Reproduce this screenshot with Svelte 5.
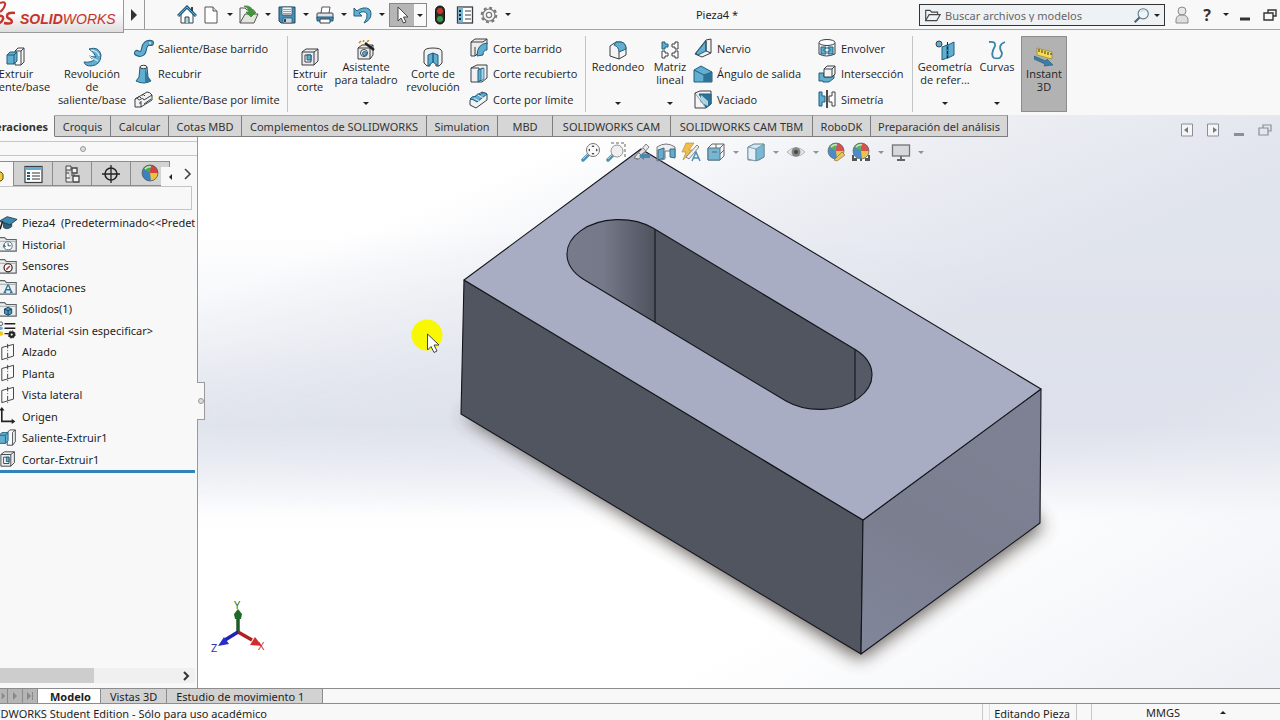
<script>
  const B = '#62aed0';
  const D = '#1f5f80';
  const K = '#3a3f44';
  const L = '#a9d5e8';
  const G = '#ececec';

  const cube = (x, y) =>
    `<path d="M${x} ${y + 3}l3-3h7v9l-3 3h-7z" fill="${B}" stroke="${D}"/><path d="M${x} ${y + 3}h7v9M${x + 7} ${y + 3}l3-3" fill="none" stroke="${D}"/>`;
  const folder = `<path d="M-1 3h6l2 2h11v13H-1z" fill="#eceeef" stroke="#5f6468" stroke-width="1.300"/><path d="M0 7h17" stroke="#888" stroke-width=".8"/>`;
  const plane = `<path d="M2 5l13-3.500v13L2 18.500z" fill="#fafafa" stroke="#333"/><path d="M8.500 1v18" stroke="#333" stroke-dasharray="5 2 1 2" fill="none"/>`;
  const sphere = `<circle cx="10" cy="9" r="8" fill="#3b7fc4"/><path d="M10 9L3 5A8 8 0 0 1 11 1z" fill="#4fa74a"/><path d="M10 9L11 1A8 8 0 0 1 18 9z" fill="#d8403a"/><path d="M10 9h8a8 8 0 0 1-7 8z" fill="#e9c33a"/><circle cx="10" cy="9" r="8" fill="none" stroke="#555" stroke-width=".7"/><path d="M5 5q3-3 6-2" stroke="#fff" stroke-width="1.500" fill="none" opacity=".7"/>`;
  const lens = `<path d="M8 12l-6 6" stroke="#3c86a8" stroke-width="3.500" stroke-linecap="round"/><path d="M7 12l-5 5" stroke="#9fd0e2" stroke-width="1"/>`;

  const icons = {
    home: `<path d="M4 9v9h12V9l-6-6z" fill="#fff" stroke="${K}"/><path d="M1 11l9-9 9 9" fill="none" stroke="${D}" stroke-width="3"/><path d="M1 11l9-9 9 9" fill="none" stroke="${B}" stroke-width="1"/><path d="M8 18v-6h4v6" fill="${L}" stroke="${K}"/><path d="M15 2v4" stroke="${K}" stroke-width="2"/>`,
    page: `<path d="M4 2h8l4 4v12H4z" fill="#fff" stroke="#555"/><path d="M12 2v4h4" fill="#ddd" stroke="#555"/>`,
    open: `<path d="M1 18V3h5l2 2h7v4" fill="#f4f4f4" stroke="#555"/><path d="M1 18l5-9h13l-4 9z" fill="#e3e6df" stroke="#555"/><path d="M5 1q8-1 9 6h3l-5 5-5-5h3q0-4-5-6z" fill="#3c9a35" stroke="#2a7426" stroke-width=".6"/>`,
    save: `<path d="M2 2h16v16H4l-2-2z" fill="#4590b8" stroke="#22485c"/><path d="M5 2h10v8H5z" fill="#f1f5f7" stroke="#22485c" stroke-width=".7"/><path d="M6 4.500h8M6 6.500h8M6 8.500h8" stroke="#7b8b94" stroke-width=".8"/><path d="M6 13h9v5H6z" fill="#cfd6da" stroke="#22485c" stroke-width=".7"/><path d="M8 14v3" stroke="#22485c" stroke-width="2"/>`,
    print: `<path d="M6 8l1-6h8l-1 6" fill="#fff" stroke="#555"/><path d="M2 9q0-1 1-1h14q1 0 1 1v5H2z" fill="#dfe3e6" stroke="${K}"/><path d="M2 12h16v4H2z" fill="#3f8db5" stroke="${D}"/><path d="M5 14h10v4H5z" fill="#fff" stroke="${K}"/>`,
    undo: `<path d="M1 3v8h8L6 8q6-3 8 1 1 4-3 9 7-3 7-9 0-7-8-6-4 1-6 3z" fill="${B}" stroke="${D}"/>`,
    pointer: `<path d="M6 2v14l3-3 2.500 5 2.500-1-2.500-5h4.500z" fill="#fff" stroke="#444"/>`,
    traffic: `<rect x="5.500" y="1" width="9" height="18" rx="4.500" fill="#2b2b28" stroke="#111"/><circle cx="10" cy="6" r="3" fill="#c8372c"/><circle cx="10" cy="14" r="3" fill="#35984a"/>`,
    list: `<rect x="2.500" y="2" width="15" height="16" fill="#fff" stroke="${K}" stroke-width="1.300"/><path d="M3 2.500h5v15H3z" fill="#7db6d0"/><path d="M4 6h2M4 10h2M4 14h2" stroke="#123" stroke-width="2"/><path d="M10 6h6M10 10h6M10 14h6" stroke="${K}" stroke-width="1.200"/>`,
    gear: `<circle cx="10" cy="10" r="7.300" fill="none" stroke="#777" stroke-width="2" stroke-dasharray="3 2.730"/><circle cx="10" cy="10" r="6" fill="#f5f5f5" stroke="#777" stroke-width="1.200"/><circle cx="10" cy="10" r="2.600" fill="#fff" stroke="#777" stroke-width="1.200"/>`,
    folderLine: `<path d="M2 16V4h5l2 2h7v3" fill="none" stroke="#444" stroke-width="1.300"/><path d="M2 16l4-7h13l-4 7z" fill="none" stroke="#444" stroke-width="1.300"/>`,
    search: `<path d="M8 12l-6 6" stroke="#51636e" stroke-width="2.500"/><circle cx="12" cy="8" r="6" fill="#eef5fa" stroke="#61788a" stroke-width="1.300"/><path d="M9 6q2-3 5-1" stroke="#b9d3e2" fill="none"/>`,
    person: `<circle cx="10" cy="6" r="4" fill="#e8e8e8" stroke="#8a8a8a"/><path d="M4 18v-3q0-5 6-5t6 5v3z" fill="#dedede" stroke="#8a8a8a"/>`,

    extrude: `<path d="M9 4l3-3h6v14l-3 3h-6z" fill="#fafafa" stroke="${K}"/><path d="M15 18V4l3-3M9 4h6" fill="none" stroke="${K}"/>${cube(1, 5)}`,
    revolve: `<path d="M7 2q10-3 12 6 0 10-10 11-6 0-7-4 7 1 11-3Q9 12 7 9q4 1 7 1Q12 5 7 2z" fill="${B}" stroke="${D}"/><path d="M7 9l9 5M9 3q7 1 8 6" stroke="#d9eff8" stroke-width="1.200" fill="none"/>`,
    sweep: `<path d="M3 15q6 3 7-4 1-7 7-6" fill="none" stroke="${D}" stroke-width="6" stroke-linecap="round"/><path d="M3 15q6 3 7-4 1-7 7-6" fill="none" stroke="${B}" stroke-width="4" stroke-linecap="round"/><circle cx="16" cy="5" r="2" fill="${L}" stroke="${D}" stroke-width=".6"/>`,
    loft: `<path d="M6 3l-1 10-3 4q8 4 15 0l-3-4-1-10z" fill="${B}" stroke="${D}"/><path d="M11 4l3 9 3 4-6 2z" fill="#34799c"/><ellipse cx="9.500" cy="3" rx="3.500" ry="1.700" fill="#f3f3f3" stroke="${K}"/>`,
    boundary: `<path d="M1 10l12-7q3 0 5 3v5L7 18H1z" fill="#f2f2f2" stroke="${K}"/><path d="M1 10q2-2 3 0t3 0 3 1L18 6M7 18v-6M4 8q2-1 3 1M8 6q2-1 3 1M5 14l2 0M10 15l7-5" fill="none" stroke="${K}"/>`,
    cut: `<path d="M2 5l4-3h12v12l-4 4H2z" fill="${G}" stroke="${K}"/><path d="M2 5h12v13M14 5l4-3" fill="none" stroke="${K}"/><path d="M5 8h6v7H5z" fill="#fff" stroke="${K}"/><path d="M7 8h4v5H7z" fill="${B}" stroke="${D}"/>`,
    wizard: `<path d="M2 8l4-3h11v10l-3 4H2z" fill="${G}" stroke="${K}"/><path d="M2 8h12v11M14 8l3-3" fill="none" stroke="${K}"/><circle cx="8" cy="13" r="3.500" fill="#fff" stroke="${K}"/><circle cx="8.500" cy="13.500" r="2" fill="${B}" stroke="${D}"/><path d="M9 3l9 7" stroke="#222" stroke-width="2.500"/><path d="M3 3l2-2M7 2l1-2M11 2l2-2M6 5h2" stroke="#c29018" stroke-width="1.500"/>`,
    cutRevolve: `<path d="M1 5q0-4 9-4t9 4v11l-3 3h-3V9l-3-3-3 3v10H4l-3-3z" fill="#f1f1f1" stroke="${K}"/><path d="M5 8l5-2v9l-5 4zM15 8l-5-2v9l5 4z" fill="${B}" stroke="${D}"/>`,
    cutSweep: `<path d="M2 4l4-3h12v5L6 18H2z" fill="${G}" stroke="${K}"/><path d="M2 4h12l4-3M6 18V9" fill="none" stroke="${K}"/><path d="M18 5q-10 1-10 13l6-1q0-5 4-5z" fill="${B}" stroke="${D}"/>`,
    cutLoft: `<path d="M2 4l6-3h10v13l-5 4H2z" fill="#f1f1f1" stroke="${K}"/><path d="M2 4h8v14" fill="none" stroke="${K}"/><path d="M9 6l5-2v11l-5 3z" fill="${B}" stroke="${D}"/><path d="M12 5l3-1v11l-3 2z" fill="${L}" stroke="${D}" stroke-width=".7"/>`,
    cutBoundary: `<path d="M1 11l12-8 5 2v6L7 19l-6-3z" fill="#f2f2f2" stroke="${K}"/><path d="M1 10q3-4 5-2 3-5 5-2 3-4 7-1l-10 8q-4-3-7-3z" fill="${B}" stroke="${D}"/><path d="M5 9l5 3M9 6l5 3" stroke="#d6edf7"/>`,
    fillet: `<path d="M2 6l6-4h5q5 1 5 7v6l-7 4-9-3z" fill="#f4f4f4" stroke="${K}"/><path d="M8 2h5q5 1 5 7l-7 3q0-5-5-7z" fill="${B}" stroke="${D}"/><path d="M11 12v7" stroke="${K}"/>`,
    pattern: `<path d="M2 2h3v2h3v3H5v2H2z" fill="${B}" stroke="${D}"/><path d="M18 2h-3v2h-3v3h3v2h3zM2 11h3v2h3v3H5v2H2zM18 11h-3v2h-3v3h3v2h3z" fill="#fff" stroke="${K}"/>`,
    rib: `<path d="M2 16l11-14 5-1v14l-9 4z" fill="#f1f1f1" stroke="${K}"/><path d="M3 15L13 3v10l-8 4z" fill="${B}" stroke="${D}"/><path d="M13 3v10l5 2" fill="none" stroke="${K}"/>`,
    draft: `<path d="M1 6l7-4 11 6v10H1z" fill="${B}" stroke="${D}"/><path d="M1 6l10 5 8-3M11 11v7" fill="none" stroke="${D}"/><path d="M11 11l8-3v10h-8z" fill="#2f7296"/>`,
    shell: `<path d="M2 4l5-2h11v13l-5 4H2z" fill="#f4f4f4" stroke="${K}"/><path d="M6 5h12v10l-5 3z" fill="#2f7296" stroke="${D}"/><path d="M8 6l7 6v5l-8-4z" fill="${L}"/><path d="M2 4l11 15" stroke="${K}" stroke-width=".5"/>`,
    wrap: `<path d="M2 5v11q7 4 16 0V5" fill="#f4f4f4" stroke="${K}"/><ellipse cx="10" cy="4.500" rx="8" ry="3" fill="#fff" stroke="${K}"/><path d="M4 9h5v2H7v2h2v3H4zM11 9h5v7h-5v-3h2v-2h-2z" fill="${B}" stroke="${D}"/>`,
    intersect: `<path d="M2 9h5v4h7V9l3-1v6l-5 4H6v-1H2z" fill="${B}" stroke="${D}"/><path d="M7 5l3-3h8v8l-3 3H7z" fill="#f4f4f4" stroke="${K}"/><path d="M7 5h8v8M15 5l3-3" fill="none" stroke="${K}"/>`,
    mirror: `<path d="M2 3h3v4h3v6H5v4H2z" fill="${B}" stroke="${D}"/><path d="M18 3h-3v4h-3v6h3v4h3z" fill="#fff" stroke="${K}"/><path d="M10 1v18" stroke="#111" stroke-width="1.500"/>`,
    refgeo: `<circle cx="4" cy="4" r="3" fill="${B}" stroke="${K}"/><path d="M7 7l5-2v13l-5 2zM13 5l6-3v13l-6 3z" fill="${B}" stroke="${D}"/><path d="M12.500 2v18" stroke="#222" stroke-dasharray="3 1.500"/>`,
    curves: `<path d="M2 2q7-1 6 4-5 9-1 12 8 2 8-5-5-8 3-11" fill="none" stroke="#3a85a8" stroke-width="1.800"/>`,
    instant: `<path d="M3 1l15 4v7L3 8z" fill="#f7dc4e" stroke="#8e7720" stroke-width=".6"/><path d="M5 2v3M8 3v3M11 4v3M14 5v3M17 6v2" stroke="#333"/><path d="M0 9l12 5 1-2 6 6-9 1 1-2L0 12z" fill="#3c7fa6" stroke="#205575" stroke-width=".6"/>`,

    fit: `${lens}<circle cx="12" cy="8" r="6.500" fill="#fafafa" stroke="#666"/><path d="M12 3l1.500 2h-3zM12 13l1.500-2h-3zM7 8l2-1.500v3zM17 8l-2-1.500v3z" fill="#333"/>`,
    area: `${lens}<path d="M5 1h14v14" fill="none" stroke="#555" stroke-dasharray="3 2"/><circle cx="11" cy="9" r="6" fill="#eee" stroke="#888"/>`,
    previous: `<path d="M3 16L15 2l3 3-10 12z" fill="#e8e8e8" stroke="#777"/><path d="M3 15l4 3M12 6l3 3M7 10l3 3" stroke="#777"/><path d="M8 14l5-4v2h6v4h-6v2z" fill="#3f86aa"/>`,
    section: `<path d="M1 5q9-6 18 0v10h-4V9H9v8l-8 2z" fill="#eee" stroke="#666"/><path d="M2 8l6-2v10l-6 2zM14 7h5v9l-5-1z" fill="#5aa3c4" stroke="${D}"/>`,
    annot: `<path d="M5 1h8L8 8h5L2 18l3-8H1z" fill="#f1b83a" stroke="#a67715" stroke-width=".6"/><path d="M5 15L16 3l2 2L8 17z" fill="#eee" stroke="#777"/><path d="M11 19l4-9 4 9M12 16h6" fill="none" stroke="#3983a8" stroke-width="1.500"/>`,
    orient: `<path d="M2 6l4-4h12v12l-4 4H2z" fill="#f7f7f7" stroke="#555"/><path d="M2 6h12v12H2z" fill="#6ab0cf" stroke="#3a6a80"/><path d="M14 6l4-4M10 2v4M14 12l4-4M6 10h5" stroke="#555"/>`,
    display: `<path d="M2 5l6-3h10v13l-5 3H2z" fill="#cfe8f3" stroke="#56727f"/><path d="M2 5l8 2v12l-8-2z" fill="#dff0f7" stroke="#56727f" stroke-width=".7"/><path d="M10 7l8-5v13l-8 4z" fill="#6cb3d2" stroke="#56727f" stroke-width=".7"/>`,
    eye: `<path d="M1 10q9-9 18 0-9 9-18 0z" fill="#e6e6e6" stroke="#aaa"/><circle cx="10" cy="10" r="4.500" fill="#777"/><circle cx="10" cy="10" r="2" fill="#333"/>`,
    appearance: `${sphere}<path d="M8 18l8-8 3 3-8 6z" fill="#eac34d" stroke="#80652a" stroke-width=".7"/>`,
    scene: `<path d="M1 13h18v6H1z" fill="#444"/><path d="M3 13h3v3H3zM14 13h3v3h-3zM6 16h3v3H6zM11 16h3v3h-3z" fill="#fff"/>${sphere}`,
    monitor: `<rect x="1.500" y="3" width="17" height="11" fill="#d4d6da" stroke="#666" stroke-width="1.300"/><path d="M10 14v3M6 18h8" stroke="#555" stroke-width="1.800"/>`,

    tabList: `<rect x="2" y="2.500" width="17" height="16" fill="#fff" stroke="${K}" stroke-width="1.200"/><path d="M2 3h17v3H2z" fill="${B}"/><path d="M4 9h3M4 12h3M4 15h3" stroke="#245e7c" stroke-width="2"/><path d="M9 9h8M9 12h8M9 15h8" stroke="#333" stroke-width="1.200"/>`,
    tabConfig: `<path d="M4 2h5v4H4zM4 6v12h6M4 9h3M4 14h4" fill="#eee" stroke="#444"/><path d="M10 4h5v5h-5zM11 12h6v6h-6z" fill="#f4f4f4" stroke="#444" stroke-width="1.300"/><path d="M9 11h4" stroke="#444"/>`,
    tabTarget: `<circle cx="10" cy="10" r="6" fill="none" stroke="#222" stroke-width="1.500"/><path d="M10 1v18M1 10h18" stroke="#222" stroke-width="1.300"/>`,
    tabSphere: sphere,

    cap: `<path d="M-1 8L8 3l11 3-8 6z" fill="#3f88ac" stroke="#1f3f50"/><path d="M4 10v5q4 3 9-1v-3l-2 1z" fill="#2a6480" stroke="#1f3f50"/><path d="M3 8l-3 9" stroke="#222" stroke-width="1.800"/>`,
    history: `${folder}<circle cx="9" cy="12" r="4.500" fill="#fff" stroke="#4a6b7c"/><path d="M9 9v3h3" stroke="#333" fill="none"/><path d="M4 10l-1 4 4-1z" fill="#2f7da3"/>`,
    sensor: `${folder}<circle cx="9" cy="12" r="4.500" fill="#fff" stroke="#222" stroke-width="1.300"/><path d="M7 14l4-4" stroke="#c33a2c" stroke-width="1.800"/>`,
    notes: `${folder}<path d="M5 16l3.500-8h1L13 16M6 13h6M4 16h3M11 16h3" fill="none" stroke="#2f7396" stroke-width="1.500"/>`,
    solids: `${folder}<path d="M5 10l4-2 4 2v5l-4 2-4-2z" fill="#4a98be" stroke="#143f55"/><path d="M5 10l4 2 4-2M9 12v5" fill="none" stroke="#143f55"/>`,
    material: `<path d="M5 3h12M5 8h12M5 14h4" stroke="#222" stroke-width="1.600"/><circle cx="1" cy="3" r="2" fill="#fff" stroke="#444"/><circle cx="1" cy="8" r="2" fill="${B}"/><circle cx="1" cy="14" r="2.500" fill="#f2c61c"/><circle cx="13" cy="15" r="2.500" fill="none" stroke="#222" stroke-width="2.500"/><circle cx="13" cy="15" r="4" fill="none" stroke="#222" stroke-dasharray="1.600 1.500"/>`,
    plane,
    origin: `<path d="M2 3v13h13" fill="none" stroke="#222" stroke-width="1.800"/><path d="M2 0l3 4h-6zM17 16l-4-3v6z" fill="#222"/>`,
    treeExtrude: `<path d="M8 4l3-3h6v13l-3 4H8z" fill="#fafafa" stroke="${K}"/><path d="M14 18V4l3-3" fill="none" stroke="${K}"/>${cube(-1, 4)}`,
    treeCut: `<path d="M1 5l4-3h11v12l-4 4H1z" fill="${G}" stroke="${K}"/><path d="M1 5h11v13M12 5l4-3" fill="none" stroke="${K}"/><path d="M4 8h6v7H4z" fill="#fff" stroke="${K}"/><path d="M7 8h3v5H7z" fill="${B}" stroke="${D}"/>`
  };

  const quick = [
    { icon: 'home', label: 'Inicio' },
    { icon: 'page', label: 'Nuevo', more: true },
    { icon: 'open', label: 'Abrir', more: true },
    { icon: 'save', label: 'Guardar', more: true },
    { icon: 'print', label: 'Imprimir', more: true },
    { icon: 'undo', label: 'Deshacer', more: true },
    { icon: 'pointer', label: 'Seleccionar', more: true, active: true },
    { icon: 'traffic', label: 'Reconstruir' },
    { icon: 'list', label: 'Propiedades' },
    { icon: 'gear', label: 'Opciones', more: true }
  ];

  const ribbon = [
    { type: 'tall', cls: 'first', icon: 'extrude', lines: ['Extruir', 'saliente/base'] },
    { type: 'tall', cls: 'w84', icon: 'revolve', lines: ['Revolución', 'de', 'saliente/base'] },
    { type: 'stack', cls: 'w153', items: [['sweep', 'Saliente/Base barrido'], ['loft', 'Recubrir'], ['boundary', 'Saliente/Base por límite']] },
    { type: 'sep' },
    { type: 'tall', cls: 'w44', icon: 'cut', lines: ['Extruir', 'corte'] },
    { type: 'tall', cls: 'w68', icon: 'wizard', lines: ['Asistente', 'para taladro'], more: true },
    { type: 'tall', cls: 'w66', icon: 'cutRevolve', lines: ['Corte de', 'revolución'] },
    { type: 'stack', cls: 'w119', items: [['cutSweep', 'Corte barrido'], ['cutLoft', 'Corte recubierto'], ['cutBoundary', 'Corte por límite']] },
    { type: 'sep' },
    { type: 'tall', cls: 'w64', icon: 'fillet', lines: ['Redondeo'], more: true },
    { type: 'tall', cls: 'w40', icon: 'pattern', lines: ['Matriz', 'lineal'], more: true },
    { type: 'stack', cls: 'w124', items: [['rib', 'Nervio'], ['draft', 'Ángulo de salida'], ['shell', 'Vaciado']] },
    { type: 'stack', cls: 'w98', items: [['wrap', 'Envolver'], ['intersect', 'Intersección'], ['mirror', 'Simetría']] },
    { type: 'sep' },
    { type: 'tall', cls: 'w64', icon: 'refgeo', lines: ['Geometría', 'de refer...'], more: true },
    { type: 'tall', cls: 'w40', icon: 'curves', lines: ['Curvas'], more: true },
    { type: 'tall', cls: 'pressed', icon: 'instant', lines: ['Instant', '3D'] }
  ];

  const tabs = ['Operaciones', 'Croquis', 'Calcular', 'Cotas MBD', 'Complementos de SOLIDWORKS', 'Simulation', 'MBD', 'SOLIDWORKS CAM', 'SOLIDWORKS CAM TBM', 'RoboDK', 'Preparación del análisis'];

  const panelTabs = [['tabList', 'Propiedades'], ['tabConfig', 'Configuraciones'], ['tabTarget', 'Cotas'], ['tabSphere', 'Apariencias']];

  const tree = [
    ['cap', 'Pieza4  (Predeterminado<<Predeterminado>'],
    ['history', 'Historial'],
    ['sensor', 'Sensores'],
    ['notes', 'Anotaciones'],
    ['solids', 'Sólidos(1)'],
    ['material', 'Material <sin especificar>'],
    ['plane', 'Alzado'],
    ['plane', 'Planta'],
    ['plane', 'Vista lateral'],
    ['origin', 'Origen'],
    ['treeExtrude', 'Saliente-Extruir1'],
    ['treeCut', 'Cortar-Extruir1']
  ];

  const view = [
    ['fit', 'Zoom para ajustar'],
    ['area', 'Zoom encuadre'],
    ['previous', 'Vista previa'],
    ['section', 'Vista de sección'],
    ['annot', 'Anotaciones'],
    ['orient', 'Orientación', true],
    ['display', 'Estilo de visualización', true],
    ['eye', 'Ocultar', true],
    ['appearance', 'Apariencia'],
    ['scene', 'Escena', true],
    ['monitor', 'Ver', true]
  ];

  let filter = $state('');
  let query = $state('');
</script>

{#snippet icon(name)}
  <svg class="icon" viewBox="0 0 20 20" aria-hidden="true">{@html icons[name]}</svg>
{/snippet}

<div class="app">
  <header class="titlebar">
    <div class="logo">
      <svg class="mark" viewBox="0 0 18 33" aria-hidden="true">
        <path d="M0 3q6-2 5 2-1 4-5 7" fill="none" stroke="#c8322b" stroke-width="2" />
        <path d="M-2 16q6-1 5 3-1 4-6 5M15 13q-8-1-8 3 0 2 3 3 3 2 1 4-2 1-7 0" fill="none" stroke="#c8322b" stroke-width="2.500" />
      </svg>
      <span class="brand"><b>SOLID</b>WORKS</span>
    </div>
    <button class="flyout" aria-label="Menú"><svg viewBox="0 0 8 14" aria-hidden="true"><path d="M1 1l6 6-6 6z" fill="#333" /></svg></button>
    <nav class="quick">
      {#each quick as q}
        <div class="qitem" class:active={q.active} class:plain={!q.more}>
          <button class="qbtn" aria-label={q.label}>{@render icon(q.icon)}</button>
          {#if q.more}<button class="drop" aria-label={'Más: ' + q.label}></button>{/if}
        </div>
      {/each}
    </nav>
    <h1>Pieza4 *</h1>
    <div class="search">
      {@render icon('folderLine')}
      <input type="text" aria-label="Buscar" placeholder="Buscar archivos y modelos" bind:value={query} />
      <button class="sbtn" aria-label="Buscar ahora">{@render icon('search')}</button>
      <button class="drop" aria-label="Opciones de búsqueda"></button>
    </div>
    <div class="window">
      <button aria-label="Cuenta">{@render icon('person')}</button>
      <button class="help">?</button>
      <button class="drop" aria-label="Ayuda"></button>
      <button class="min" aria-label="Minimizar"><svg viewBox="0 0 14 14"><path d="M2 11h10" stroke="#333" stroke-width="3" /></svg></button>
      <button class="max" aria-label="Restaurar"><svg viewBox="0 0 14 14"><path d="M5 5V2h8v6h-3M1 5h9v7H1z" fill="none" stroke="#333" stroke-width="1.400" /></svg></button>
    </div>
  </header>

  <div class="ribbon">
    {#each ribbon as r}
      {#if r.type === 'sep'}
        <span class="sep"></span>
      {:else if r.type === 'tall'}
        <button class="tall {r.cls}" class:more={r.more}>
          {@render icon(r.icon)}
          {#each r.lines as line}<span>{line}</span>{/each}
          {#if r.more}<i class="arrow"></i>{/if}
        </button>
      {:else}
        <div class="stack {r.cls}">
          {#each r.items as [name, text]}
            <button>{@render icon(name)}<span>{text}</span></button>
          {/each}
        </div>
      {/if}
    {/each}
  </div>

  <main class="work">
    <svg class="scene" viewBox="0 0 1280 573" preserveAspectRatio="xMidYMid slice" aria-hidden="true">
      <defs>
        <linearGradient id="band" x1="0" y1="0" x2="0" y2="1">
          <stop offset="0.200" stop-color="#e2e6ef" stop-opacity="0" />
          <stop offset="0.400" stop-color="#e2e6ef" stop-opacity="0.450" />
          <stop offset="0.540" stop-color="#dfe3ed" stop-opacity="0.900" />
          <stop offset="0.580" stop-color="#e4e7f0" stop-opacity="0.800" />
          <stop offset="0.660" stop-color="#f5f6fa" stop-opacity="0.700" />
          <stop offset="0.740" stop-color="#ffffff" stop-opacity="0" />
        </linearGradient>
        <linearGradient id="sky" x1="0.500" y1="0" x2="0.780" y2="0.300">
          <stop offset="0" stop-color="#dbdfe9" stop-opacity="0" />
          <stop offset="0.500" stop-color="#dbdfe9" stop-opacity="0.550" />
          <stop offset="1" stop-color="#dbdfe9" stop-opacity="0.850" />
        </linearGradient>
        <linearGradient id="fade" x1="0" y1="0" x2="0" y2="1">
          <stop offset="0" stop-color="#fff" />
          <stop offset="0.480" stop-color="#fff" />
          <stop offset="0.700" stop-color="#000" />
        </linearGradient>
        <mask id="skymask"><rect width="1280" height="573" fill="url(#fade)" /></mask>
        <linearGradient id="floor" x1="0.500" y1="0.600" x2="1" y2="1">
          <stop offset="0.400" stop-color="#eef0f5" stop-opacity="0" />
          <stop offset="1" stop-color="#eef0f5" />
        </linearGradient>
        <linearGradient id="round" x1="0" y1="0" x2="1" y2="0">
          <stop offset="0" stop-color="#777b8c" />
          <stop offset="0.450" stop-color="#757989" />
          <stop offset="1" stop-color="#4f535e" />
        </linearGradient>
        <linearGradient id="side" x1="0" y1="1" x2="0.400" y2="0">
          <stop offset="0" stop-color="#82869a" />
          <stop offset="0.500" stop-color="#7a7e8f" />
          <stop offset="1" stop-color="#7d8193" />
        </linearGradient>
        <filter id="soft" x="-10%" y="-10%" width="120%" height="120%"><feGaussianBlur stdDeviation="9" /></filter>
        <clipPath id="slot"><path d="M653 113L856 235A52 34.500 0 0 1 786 286L583 164A52 34.500 0 0 1 653 113z" /></clipPath>
      </defs>
      <rect width="1280" height="573" fill="#fff" />
      <rect width="1280" height="573" fill="url(#band)" />
      <rect width="1280" height="573" fill="url(#sky)" mask="url(#skymask)" />
      <rect width="1280" height="573" fill="url(#floor)" />
      <path d="M462 300L860 544L1044 411L1000 370L640 270z" fill="#463f3a" opacity="0.850" filter="url(#soft)" />
      <g stroke="#14151c" stroke-width="1.100" stroke-linejoin="round">
        <path d="M464 165L863 405L861 539L461 299z" fill="#51555f" />
        <path d="M863 405L1041 274L1040 408L861 539z" fill="url(#side)" />
        <path d="M464 165L641 34L1041 274L863 405z" fill="#a8adc3" />
        <g clip-path="url(#slot)">
          <rect x="560" y="95" width="95" height="130" fill="url(#round)" stroke="none" />
          <rect x="655" y="95" width="200" height="210" fill="#51555f" stroke="none" />
          <rect x="855" y="200" width="20" height="100" fill="#565a66" stroke="none" />
          <path d="M655 100v120M855 220v80" />
        </g>
        <path d="M653 113L856 235A52 34.500 0 0 1 786 286L583 164A52 34.500 0 0 1 653 113z" fill="none" />
      </g>
      <circle cx="427" cy="220" r="15.500" fill="#f8f800" />
      <path d="M427.500 219v16l3.500-3.500 3 6 3-1.500-3-6h5z" fill="#fff" stroke="#444" />
      <g stroke-width="3.500">
        <path d="M238 517v-14" stroke="#1d5c22" /><path d="M238 494l4 5-1 5h-6l-1-5z" fill="#1f6a28" />
        <path d="M238 517l14 8" stroke="#b02020" /><path d="M262 531l-12-1 5-8z" fill="#d42a2a" />
        <path d="M238 517l-13 8" stroke="#2222b0" /><path d="M218 531l6-9 5 7z" fill="#2b2bd0" />
      </g>
      <g class="axis">
        <text x="234" y="494" fill="#2f7d36">Y</text>
        <text x="258" y="535" fill="#c33">X</text>
        <text x="211" y="537" fill="#33a">Z</text>
      </g>
    </svg>

    <nav class="tabs">
      {#each tabs as t, i}<button class:on={i === 0}>{t}</button>{/each}
    </nav>
    <div class="docbtns">
      <button aria-label="Panel izquierdo"><svg viewBox="0 0 14 14"><path d="M1.500 1h11v12h-11z" fill="#f4f5f8" stroke="#8b8e94" /><path d="M8 4v6L4 7z" fill="#777" /></svg></button>
      <button aria-label="Panel derecho"><svg viewBox="0 0 14 14"><path d="M1.500 1h11v12h-11z" fill="#f4f5f8" stroke="#8b8e94" /><path d="M7 4v6l4-3z" fill="#777" /></svg></button>
      <button aria-label="Minimizar documento"><svg viewBox="0 0 14 14"><path d="M2 11.500h10" stroke="#8b8e94" stroke-width="3" /></svg></button>
      <button aria-label="Restaurar documento"><svg viewBox="0 0 14 14"><path d="M5 5V2h8v6h-3M1 5h9v7H1z" fill="none" stroke="#8b8e94" stroke-width="1.200" /></svg></button>
    </div>

    <aside class="panel">
      <div class="grip"><span class="dot"></span></div>
      <div class="ptabs">
        <button class="current" aria-label="Árbol de operaciones"><svg viewBox="0 0 12 20"><path d="M-6 8h7l2 2v5l-2 2h-7z" fill="#f3c934" stroke="#5a4a10" /></svg></button>
        {#each panelTabs as [name, label]}<button aria-label={label}>{@render icon(name)}</button>{/each}
        <button class="scroll" aria-label="Anterior"><svg viewBox="0 0 8 10"><path d="M6 2v6L3 5z" fill="#222" /></svg></button>
        <button class="next" aria-label="Siguiente"><svg viewBox="0 0 10 12"><path d="M2 1l5 5-5 5" fill="none" stroke="#444" stroke-width="1.600" /></svg></button>
      </div>
      <input class="filter" type="text" aria-label="Filtro" bind:value={filter} />
      <ul class="tree">
        {#each tree as [name, text]}<li>{@render icon(name)}<span>{text}</span></li>{/each}
      </ul>
      <div class="rollback"></div>
      <div class="hscroll">
        <span class="thumb"></span>
        <button aria-label="Desplazar"><svg viewBox="0 0 10 12"><path d="M2 2l4 4-4 4" fill="none" stroke="#333" stroke-width="2" /></svg></button>
      </div>
      <button class="handle" aria-label="Contraer panel"><span class="dot"></span></button>
    </aside>

    <div class="viewport">
      <div class="heads">
        {#each view as [name, label, more]}
          <button class="vbtn" aria-label={label}>{@render icon(name)}</button>
          {#if more}<button class="drop soft" aria-label={'Más: ' + label}></button>{/if}
        {/each}
      </div>
    </div>
  </main>

  <nav class="sheets">
    <button class="step" aria-label="Siguiente hoja"><svg viewBox="0 0 8 10"><path d="M2 1l4 4-4 4z" fill="#888" /></svg></button>
    <button class="step" aria-label="Hoja siguiente"><svg viewBox="0 0 8 10"><path d="M2 1l4 4-4 4z" fill="#888" /></svg></button>
    <button class="step" aria-label="Última hoja"><svg viewBox="0 0 8 10"><path d="M1 1l4 4-4 4zM6 1h1v8H6z" fill="#888" /></svg></button>
    <button class="on">Modelo</button>
    <button>Vistas 3D</button>
    <button class="study">Estudio de movimiento 1</button>
  </nav>

  <footer class="status">
    <div class="edition"><span>SOLIDWORKS Student Edition - Sólo para uso académico</span></div>
    <div class="mode"><span>Editando Pieza</span></div>
    <div class="units"><button>MMGS</button><i class="arrow up"></i></div>
  </footer>
</div>

<style>
  :global(body) { background: #f8f8f8; overflow: hidden; }
  .app {
    display: flex;
    flex-direction: column;
    height: 100vh;
    font: 11px/13px "Noto Sans", sans-serif;
    color: #1e1e1e;
    background: #f8f8f8;
    overflow: hidden;
  }
  button {
    margin: 0;
    padding: 0;
    border: 0;
    background: none;
    font: inherit;
    color: inherit;
    display: flex;
    align-items: center;
    justify-content: center;
    white-space: nowrap;
    flex: none;
  }
  .icon { width: 20px; height: 20px; flex: none; display: block; }
  .drop { width: 14px; align-self: stretch; }
  .drop::after, .arrow {
    content: "";
    border: 3px solid transparent;
    border-top-color: #222;
    border-bottom: 0;
  }
  .drop.soft::after { border-top-color: #888; }
  .arrow.up { border: 3px solid transparent; border-bottom-color: #222; border-top: 0; }

  .titlebar {
    display: flex;
    height: 29px;
    flex: none;
    border-bottom: 1px solid #a3a5a7;
    align-items: stretch;
  }
  .logo {
    width: 123px;
    height: 32px;
    flex: none;
    display: flex;
    align-items: center;
    background: linear-gradient(#fdfdfd 40%, #dedede);
    border-right: 1px solid #999;
    border-bottom: 1px solid #999;
    z-index: 1;
  }
  .mark { width: 18px; height: 33px; }
  .brand { font: italic 14px/20px "Liberation Sans", sans-serif; color: #c8322b; padding: 6px 0 0 2px; }
  .flyout { width: 21px; border-right: 1px solid #999; }
  .flyout svg { width: 8px; height: 14px; }
  .quick { display: flex; padding-left: 29px; flex: none; }
  .qitem { display: flex; }
  .qbtn { width: 24px; }
  .plain .qbtn { width: 25px; }
  .qitem.active { border: 1px solid #888; margin: 3px 0 2px; background: #fafafa; }
  .active .qbtn { background: #b6b6b6; }
  .active .drop { width: 12px; }
  h1 { flex: 1; margin: 0; font: inherit; text-align: center; align-self: center; }
  .search {
    flex: none;
    width: 246px;
    box-sizing: border-box;
    display: flex;
    align-items: center;
    margin: 4px 0 3px;
    padding-left: 4px;
    border: 1px solid #333;
    background: #eff2f4;
  }
  .search .icon { width: 17px; height: 17px; }
  .search input { flex: 1; min-width: 0; border: 0; background: none; font: inherit; padding: 0 4px; outline: 0; }
  .search input::placeholder { color: #666; opacity: 1; }
  .window { display: flex; align-items: center; flex: none; width: 115px; padding-left: 7px; box-sizing: border-box; }
  .help { font: bold 16px/20px "Noto Sans", sans-serif; width: 30px; color: #333; }
  .window .drop { width: 8px; }
  .window svg:not(.icon) { width: 14px; height: 14px; }
  .min { width: 30px; }
  .max { width: 20px; }

  .ribbon { display: flex; height: 85px; flex: none; overflow: hidden; font-family: "Open Sans", sans-serif; }
  .sep { width: 1px; flex: none; margin: 6px 0 3px; background: #c4c4c4; }
  .tall { flex-direction: column; justify-content: flex-start; padding-top: 17px; }
  .tall.more { padding-top: 10px; height: 75px; }
  .arrow { margin-top: auto; }
  .first { width: 68px; margin-left: -18px; }
  .w40 { width: 40px; }
  .w44 { width: 44px; }
  .w64 { width: 64px; }
  .w66 { width: 66px; }
  .w68 { width: 68px; }
  .w84 { width: 84px; }
  .w98 { width: 98px; }
  .w119 { width: 119px; }
  .w124 { width: 124px; }
  .w153 { width: 153px; }
  .pressed { width: 46px; height: 76px; margin: 6px 0 0 4px; padding-top: 10px; box-sizing: border-box; background: #b2b2b2; border: 1px solid #8d8d8d; }
  .stack { display: flex; flex-direction: column; justify-content: space-between; flex: none; padding: 8px 0 6px 3px; box-sizing: border-box; }
  .stack.w153 { padding-left: 0; }
  .stack button { justify-content: flex-start; gap: 4px; }

  .work {
    position: relative;
    flex: 1;
    min-height: 0;
    display: grid;
    grid-template-columns: 198px 1fr auto;
    grid-template-rows: 22px 1fr;
  }
  .scene { position: absolute; inset: 0; width: 100%; height: 100%; }
  .axis { font: 11px "Noto Sans", sans-serif; }
  .tabs {
    position: relative;
    grid-column: 1 / 3;
    justify-self: start;
    display: grid;
    grid-template-columns: 55px 56px 58px 73px 185px 71px 55px 118px 142px 58px 137px;
  }
  .tabs button {
    background: #d6d6d6;
    border-right: 1px solid #7d7d7d;
    border-bottom: 1px solid #7d7d7d;
    border-top: 1px solid #a8a8a8;
    color: #333;
  }
  .tabs .on { background: #f8f8f8; border-color: #f8f8f8 #7d7d7d #f8f8f8 #f8f8f8; font-weight: bold; justify-content: flex-end; padding-right: 6px; overflow: hidden; }
  .docbtns { position: relative; display: flex; gap: 12px; align-items: center; padding: 8px 8px 0 0; }
  .docbtns svg { width: 14px; height: 14px; }

  .panel { position: relative; display: flex; flex-direction: column; background: #f8f8f8; border-right: 1px solid #999; min-width: 0; }
  .grip { height: 13px; margin-top: 4px; border: solid #c6c6c6; border-width: 1px 0; display: flex; align-items: center; padding-left: 80px; flex: none; }
  .dot { width: 4px; height: 4px; border: 1px solid #999; border-radius: 50%; background: #ddd; }
  .ptabs { display: flex; height: 25px; margin-top: 5px; flex: none; }
  .ptabs button { width: 39px; background: #d2d2d2; box-sizing: border-box; border: solid #8c8c8c; border-width: 1px 1px 1px 0; }
  .ptabs .current { width: 14px; background: #f8f8f8; border-bottom: 0; justify-content: flex-start; }
  .current svg { width: 12px; height: 20px; }
  .ptabs .scroll { width: 18px; margin-left: -9px; background: #f8f8f8; border: 0; margin-top: 6px; }
  .scroll svg { width: 8px; height: 10px; }
  .ptabs .next { flex: 1; background: #f8f8f8; border: 0; }
  .next svg { width: 10px; height: 12px; }
  .filter { height: 24px; margin: 0 5px 0 0; box-sizing: border-box; border: 1px solid #c4c4c4; border-left: 0; background: #f8f8f8; flex: none; outline: 0; }
  .tree { list-style: none; margin: 2px 2px 0 0; padding: 0; height: 258px; display: flex; flex-direction: column; flex: none; overflow: hidden; }
  .tree li { flex: 1; display: flex; align-items: center; gap: 4px; white-space: pre; }
  .tree .icon { width: 18px; height: 18px; }
  .rollback { height: 3px; background: #2f83b8; margin-right: 2px; flex: none; }
  .hscroll { height: 15px; margin: auto 2px 5px 0; display: flex; justify-content: space-between; background: #f0f0f0; flex: none; }
  .thumb { width: 94px; background: #cdcdcd; }
  .hscroll button { width: 16px; }
  .hscroll svg { width: 10px; height: 12px; }
  .handle { position: absolute; left: 197px; top: 245px; width: 8px; height: 38px; background: #f8f8f8; border: 1px solid #999; border-left: 0; box-sizing: border-box; }
  .viewport { position: relative; grid-column: 2 / 4; }
  .heads { display: flex; padding: 5px 0 0 380px; opacity: 0.9; }
  .vbtn { width: 25px; }
  .drop.soft { width: 15px; }

  .sheets { display: flex; height: 14px; flex: none; border-top: 1px solid #8c8c8c; border-bottom: 1px solid #8c8c8c; background: #f8f8f8; }
  .sheets button { background: #d2d2d2; border-right: 1px solid #8c8c8c; padding: 0 9px; }
  .sheets .step { width: 15px; padding: 0; background: #b5b5b5; box-sizing: border-box; }
  .sheets .step:first-child { width: 8px; }
  .step svg { width: 8px; height: 10px; }
  .sheets .on { background: #fff; font-weight: bold; padding: 0 9px 0 12px; }
  .sheets .study { padding-right: 18px; }
  .status { display: flex; height: 16px; flex: none; align-items: stretch; line-height: 19px; overflow: hidden; }
  .edition { width: 267px; display: flex; justify-content: flex-end; flex: none; white-space: nowrap; }
  .mode { margin-left: auto; border-left: 1px solid #c8c8c8; border-right: 1px solid #c8c8c8; padding: 0 6px 0 6px; display: flex; }
  .mode span { border-left: 1px solid #ddd; padding-left: 4px; }
  .units { margin-left: 14px; border-left: 1px solid #c8c8c8; width: 188px; display: flex; align-items: center; }
  .units button { width: 142px; }
  .units .arrow { margin: 0 0 0 -14px; }
</style>
